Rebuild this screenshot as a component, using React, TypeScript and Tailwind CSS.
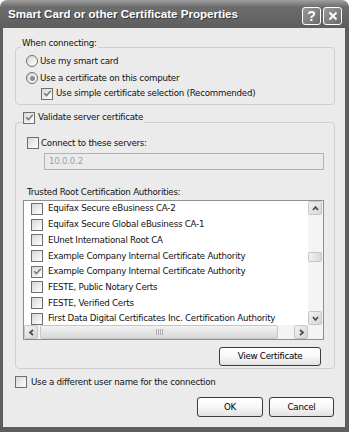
import React from "react"

const certs = [
  { name: "Equifax Secure eBusiness CA-2", checked: false },
  { name: "Equifax Secure Global eBusiness CA-1", checked: false },
  { name: "EUnet International Root CA", checked: false },
  { name: "Example Company Internal Certificate Authority", checked: false },
  { name: "Example Company Internal Certificate Authority", checked: true },
  { name: "FESTE, Public Notary Certs", checked: false },
  { name: "FESTE, Verified Certs", checked: false },
  { name: "First Data Digital Certificates Inc. Certification Authority", checked: false },
]

function Check({ checked = false }: { checked?: boolean }) {
  return (
    <span className="w-[12px] h-[12px] shrink-0 border border-[#6e6e6e] bg-gradient-to-br from-[#d8d8d8] to-white flex items-center justify-center">
      {checked && (
        <svg width="9" height="9" viewBox="0 0 9 9">
          <path d="M1.2 4.2 L3.5 6.6 L7.8 1.8" fill="none" stroke="#7c7c7c" strokeWidth="1.6" />
        </svg>
      )}
    </span>
  )
}

function Radio({ checked = false }: { checked?: boolean }) {
  return (
    <span className="w-[12px] h-[12px] shrink-0 rounded-full border border-[#6e6e6e] bg-gradient-to-br from-[#d8d8d8] to-white flex items-center justify-center">
      {checked && <span className="w-[5px] h-[5px] rounded-full bg-[#8c8c8c]" />}
    </span>
  )
}

function Arrow({ dir }: { dir: "up" | "down" | "left" | "right" }) {
  const d = {
    up: "M2 6 L4.5 3 L7 6",
    down: "M2 3 L4.5 6 L7 3",
    left: "M6 2 L3 4.5 L6 7",
    right: "M3 2 L6 4.5 L3 7",
  }[dir]
  return (
    <svg width="9" height="9" viewBox="0 0 9 9">
      <path d={d} fill="none" stroke="#4a4a4a" strokeWidth="1.7" />
    </svg>
  )
}

function ScrollBtn({ dir }: { dir: "up" | "down" | "left" | "right" }) {
  return (
    <div className="w-[14px] h-[14px] shrink-0 rounded-[2px] border border-[#c6c6c6] bg-gradient-to-br from-[#f2f2f2] to-[#d6d6d6] flex items-center justify-center">
      <Arrow dir={dir} />
    </div>
  )
}

function Button({ label, className }: { label: string; className: string }) {
  return (
    <button className={"shrink-0 rounded-[3px] border border-[#3c3c3c] bg-gradient-to-b from-white via-[#f7f7f7] to-[#e2e2e2] flex items-center justify-center text-black " + className}>
      {label}
    </button>
  )
}

export default function App() {
  return (
    <div className="w-[349px] h-[432px] flex flex-col bg-white font-['DejaVu_Sans',Verdana,sans-serif] text-[8.7px] leading-none text-[#111] tracking-[-0.25px]">
      {/* title bar */}
      <div className="h-[28px] shrink-0 rounded-t-[7px] bg-gradient-to-b from-[#a0a0a0] via-[#6c6c6c] via-25% to-[#5e5e5e] flex items-center pl-[8px] pr-[7px]">
        <span className="flex-1 text-white font-bold text-[11.6px] tracking-normal font-['Liberation_Sans',Arial,sans-serif] [text-shadow:1px_1px_0_#3a3a3a]">
          Smart Card or other Certificate Properties
        </span>
        <div className="flex gap-[2px] mt-[3px]">
          <div className="w-[19px] h-[18px] rounded-[3px] border border-white bg-gradient-to-br from-[#9a9a9a] to-[#6a6a6a] flex items-center justify-center text-white font-bold text-[14px] font-['Liberation_Sans',Arial,sans-serif]">
            ?
          </div>
          <div className="w-[19px] h-[18px] rounded-[3px] border border-white bg-gradient-to-br from-[#9a9a9a] to-[#6a6a6a] flex items-center justify-center">
            <svg width="10" height="10" viewBox="0 0 10 10">
              <path d="M1.5 1.5 L8.5 8.5 M8.5 1.5 L1.5 8.5" stroke="white" strokeWidth="2" />
            </svg>
          </div>
        </div>
      </div>

      {/* client area */}
      <div className="flex-1 flex flex-col bg-[#ebebeb] border-l-[3px] border-r-[4px] border-b-[5px] border-[#5e5e5e] pl-[12px] pr-[10px] pt-[19px] pb-[10px]">
        {/* When connecting */}
        <div className="border border-[#cfcfcf] rounded-[4px] pb-[3px]">
          <div className="-mt-[11px] ml-[5px] px-[1px] w-fit bg-[#ebebeb] h-[12px] flex items-center">When connecting:</div>
          <div className="mt-[4px] h-[16px] flex items-center gap-[2px] ml-[10px]">
            <Radio />
            <span>Use my smart card</span>
          </div>
          <div className="mt-[1px] h-[16px] flex items-center gap-[2px] ml-[10px]">
            <Radio checked />
            <span>Use a certificate on this computer</span>
          </div>
          <div className="h-[15px] flex items-center gap-[3px] ml-[25px]">
            <Check checked />
            <span>Use simple certificate selection (Recommended)</span>
          </div>
        </div>

        {/* Validate server certificate */}
        <div className="mt-[17px] border border-[#cfcfcf] rounded-[4px] pb-[2px] flex flex-col">
          <div className="-mt-[12px] ml-[6px] px-[1px] w-fit bg-[#ebebeb] h-[13px] flex items-center gap-[3px]">
            <Check checked />
            <span>Validate server certificate</span>
          </div>
          <div className="mt-[12px] h-[14px] flex items-center gap-[2px] ml-[11px]">
            <Check />
            <span>Connect to these servers:</span>
          </div>
          <div className="mt-[3px] ml-[28px] mr-[10px] h-[17px] border border-[#b2b2b2] flex items-center pl-[4px] text-[#a2a2a2]">
            10.0.0.2
          </div>
          <div className="mt-[16px] h-[12px] flex items-center ml-[11px]">Trusted Root Certification Authorities:</div>

          {/* list box */}
          <div className="mt-[2px] ml-[7px] mr-[10px] h-[140px] border border-[#8e8e8e] bg-white flex flex-col">
            <div className="flex-1 flex min-h-0">
              <div className="flex-1 overflow-hidden">
                {certs.map((c, i) => (
                  <div key={i} className="h-[15.7px] flex items-center pl-[7px] gap-[5px]">
                    <Check checked={c.checked} />
                    <span className="whitespace-nowrap">{c.name}</span>
                  </div>
                ))}
              </div>
              <div className="w-[15px] shrink-0 flex flex-col bg-[#f4f4f4]">
                <ScrollBtn dir="up" />
                <div className="flex-1">
                  <div className="mt-[37px] h-[10px] w-[14px] rounded-[2px] border border-[#c6c6c6] bg-gradient-to-r from-[#f2f2f2] to-[#d8d8d8]" />
                </div>
                <ScrollBtn dir="down" />
              </div>
            </div>
            <div className="h-[14px] shrink-0 flex bg-[#f4f4f4]">
              <ScrollBtn dir="left" />
              <div className="flex-1 flex">
                <div className="ml-[2px] w-[238px] h-[14px] rounded-[2px] border border-[#c6c6c6] bg-gradient-to-b from-[#f2f2f2] to-[#d8d8d8] flex items-center justify-center gap-[1px]">
                  <span className="w-[1px] h-[6px] bg-[#b0b0b0]" />
                  <span className="w-[1px] h-[6px] bg-[#b0b0b0]" />
                  <span className="w-[1px] h-[6px] bg-[#b0b0b0]" />
                  <span className="w-[1px] h-[6px] bg-[#b0b0b0]" />
                </div>
              </div>
              <ScrollBtn dir="right" />
              <div className="w-[15px] shrink-0 bg-[#f4f4f4]" />
            </div>
          </div>

          <Button label="View Certificate" className="mt-[7px] self-end mr-[13px] w-[102px] h-[19px]" />
        </div>

        <div className="mt-[7px] h-[12px] flex items-center gap-[4px]">
          <Check />
          <span>Use a different user name for the connection</span>
        </div>

        <div className="mt-[9px] flex justify-end gap-[6px] mr-[1px]">
          <Button label="OK" className="w-[66px] h-[20px]" />
          <Button label="Cancel" className="w-[65px] h-[20px]" />
        </div>
      </div>
    </div>
  )
}
